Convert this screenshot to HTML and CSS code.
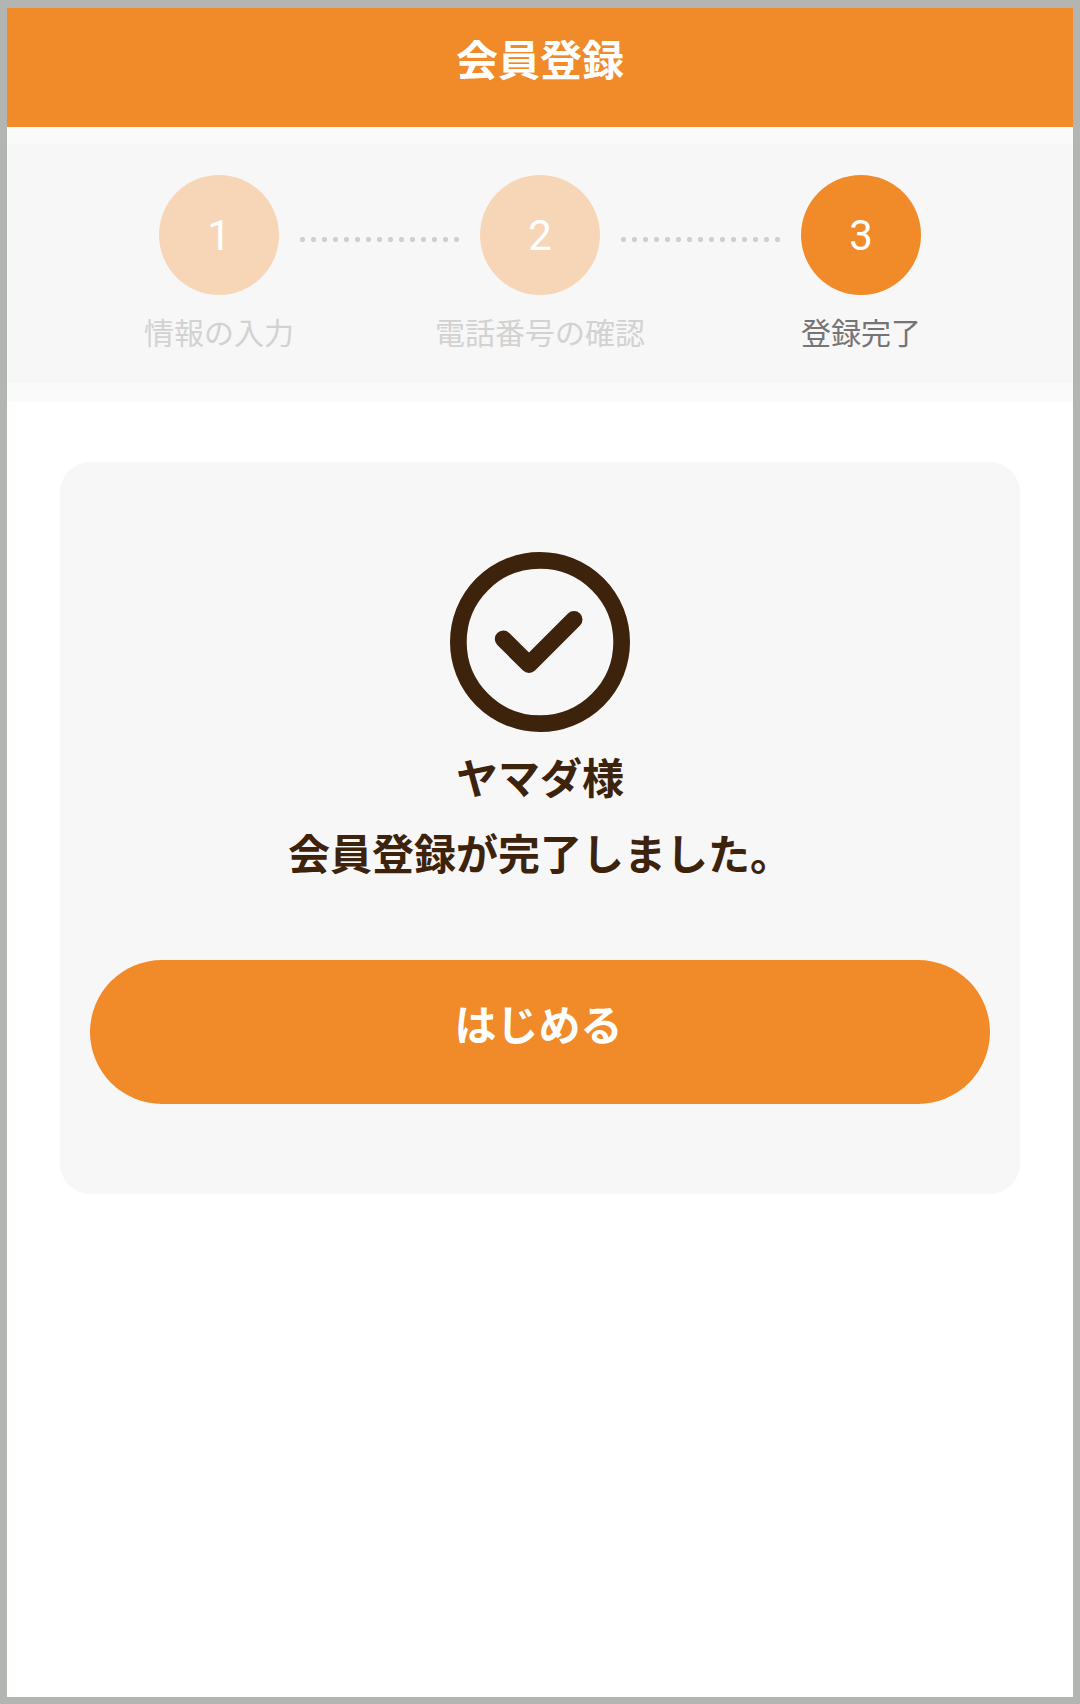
FILE: index.html
```html
<!DOCTYPE html>
<html lang="ja">
<head>
<meta charset="utf-8">
<title>会員登録</title>
<link rel="stylesheet" href="styles.css">
</head>
<body>
<div class="frame">
  <header class="app-header"><h1 class="app-title">会員登録</h1></header>
  <section class="steps-band">
    <div class="steps">
      <div class="step-circle is-done">1</div>
      <div class="step-dots"></div>
      <div class="step-circle is-done">2</div>
      <div class="step-dots"></div>
      <div class="step-circle is-current">3</div>
      <div class="step-label">情報の入力</div>
      <div class="step-label step-label-2">電話番号の確認</div>
      <div class="step-label step-label-3 is-current-label">登録完了</div>
    </div>
  </section>
  <main class="content">
    <section class="card">
      <svg class="check-icon" viewBox="0 0 180 180" aria-hidden="true">
        <circle cx="90" cy="90" r="81.65" fill="none" stroke="currentColor" stroke-width="16.7"/>
        <path d="M53.300 87 L79 112.500 L124 67.500" fill="none" stroke="currentColor" stroke-width="17" stroke-linecap="round" stroke-linejoin="round"/>
      </svg>
      <p class="message message-name">ヤマダ様</p>
      <p class="message">会員登録が完了しました。</p>
      <button class="start-button" type="button">はじめる</button>
    </section>
  </main>
</div>
</body>
</html>
```
FILE: styles.css
```css
* { box-sizing: border-box; }
html, body { margin: 0; padding: 0; }
body {
  width: 1080px;
  height: 1704px;
  padding: 8px 7px 7px;
  background: #b3b5b3;
  font-family: "Noto Sans CJK JP", "Noto Sans", sans-serif;
  overflow: hidden;
}
.frame {
  height: 100%;
  background: #fff;
  display: flex;
  flex-direction: column;
}
.app-header {
  height: 119px;
  padding-top: 20px;
  background: #f18a29;
  text-align: center;
  flex: none;
}
.app-title {
  margin: 0;
  font-size: 42px;
  line-height: 60px;
  font-weight: 700;
  color: #fff;
}
.steps-band {
  flex: none;
  height: 275px;
  border-top: 17px solid #fafafa;
  border-bottom: 19px solid #fafafa;
  background: #f7f7f7;
  padding-top: 31px;
}
.steps {
  display: grid;
  grid-template-columns: 120px 201px 120px 201px 120px;
  grid-template-rows: 120px auto;
  justify-content: center;
}
.step-circle {
  width: 120px;
  height: 120px;
  border-radius: 50%;
  display: flex;
  align-items: center;
  justify-content: center;
  font-family: Roboto, sans-serif;
  font-weight: 400;
  font-size: 42px;
  color: #fff;
}
.step-circle.is-done { background: #f7d6b8; }
.step-circle.is-current { background: #f18a29; }
.step-dots {
  align-self: start;
  height: 5px;
  margin: 62px 20px 0 21px;
  background-image: radial-gradient(circle at 2.5px 2.5px, #d0d0d0 2.4px, transparent 2.9px);
  background-size: 11px 5px;
  background-repeat: repeat-x;
}
.step-label {
  grid-column: 1;
  grid-row: 2;
  justify-self: center;
  white-space: nowrap;
  margin-top: 16px;
  font-size: 30px;
  line-height: 40px;
  font-weight: 400;
  color: #d2d2d2;
}
.step-label-2 { grid-column: 3; }
.step-label-3 { grid-column: 5; }
.is-current-label { color: #757575; }
.content {
  padding: 60px 53px 0;
}
.card {
  height: 732px;
  padding: 90px 30px;
  border-radius: 30px;
  background: #f7f7f7;
  display: flex;
  flex-direction: column;
  align-items: center;
  color: #3d220c;
}
.check-icon {
  width: 180px;
  height: 180px;
  display: block;
  flex: none;
  margin-bottom: 6px;
}
.message {
  margin: 0;
  font-size: 42px;
  line-height: 76px;
  font-weight: 700;
  text-align: center;
}
.start-button {
  width: 900px;
  height: 144px;
  margin-top: 70px;
  padding: 0 3px 20px 0;
  border: 0;
  border-radius: 72px;
  background: #f18a29;
  color: #fff;
  font-family: inherit;
  font-size: 42px;
  font-weight: 700;
  flex: none;
}
```
